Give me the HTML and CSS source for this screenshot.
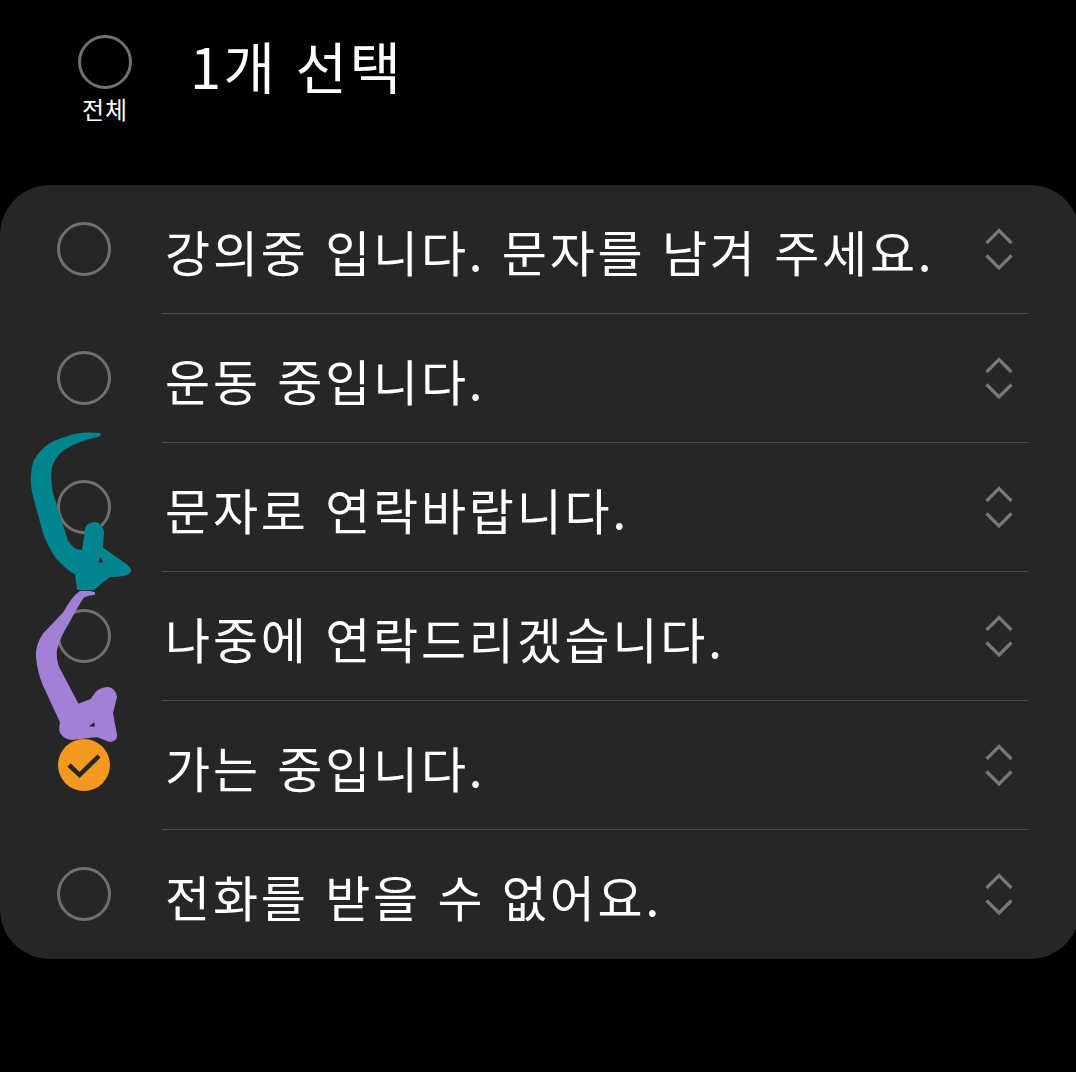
FILE: index.html
```html
<!DOCTYPE html>
<html lang="ko">
<head>
<meta charset="UTF-8">
<meta name="viewport" content="width=device-width, initial-scale=1.0">
<title>1개 선택</title>
<link rel="stylesheet" href="styles.css">
</head>
<body>
  <div class="header">
    <div class="select-all">
      <span class="radio"></span>
      <span class="select-all-label">전체</span>
    </div>
    <h1 class="title">1개 선택</h1>
  </div>

  <div class="panel">
    <div class="row">
      <span class="radio"></span>
      <div class="row-body">
        <span class="message">강의중 입니다. 문자를 남겨 주세요.</span>
        <svg class="sort" viewBox="0 0 28 42"><path d="M1.5 15 14 2.5 26.5 15M1.5 27.500 14 40 26.500 27.500"/></svg>
      </div>
    </div>
    <div class="row">
      <span class="radio"></span>
      <div class="row-body">
        <span class="message">운동 중입니다.</span>
        <svg class="sort" viewBox="0 0 28 42"><path d="M1.5 15 14 2.5 26.5 15M1.5 27.500 14 40 26.500 27.500"/></svg>
      </div>
    </div>
    <div class="row">
      <span class="radio"></span>
      <div class="row-body">
        <span class="message">문자로 연락바랍니다.</span>
        <svg class="sort" viewBox="0 0 28 42"><path d="M1.5 15 14 2.5 26.5 15M1.5 27.500 14 40 26.500 27.500"/></svg>
      </div>
    </div>
    <div class="row">
      <span class="radio"></span>
      <div class="row-body">
        <span class="message">나중에 연락드리겠습니다.</span>
        <svg class="sort" viewBox="0 0 28 42"><path d="M1.5 15 14 2.5 26.5 15M1.5 27.500 14 40 26.500 27.500"/></svg>
      </div>
    </div>
    <div class="row">
      <span class="radio radio-checked">
        <svg viewBox="0 0 52 52"><path d="M11 26 21.500 36 41 17"/></svg>
      </span>
      <div class="row-body">
        <span class="message">가는 중입니다.</span>
        <svg class="sort" viewBox="0 0 28 42"><path d="M1.5 15 14 2.5 26.5 15M1.5 27.500 14 40 26.500 27.500"/></svg>
      </div>
    </div>
    <div class="row">
      <span class="radio"></span>
      <div class="row-body">
        <span class="message">전화를 받을 수 없어요.</span>
        <svg class="sort" viewBox="0 0 28 42"><path d="M1.5 15 14 2.5 26.5 15M1.5 27.500 14 40 26.500 27.500"/></svg>
      </div>
    </div>
  </div>

  <!-- hand drawn arrows on top of the screenshot -->
  <svg class="scribble" viewBox="0 0 1076 1072">
    <path class="scribble-teal" fill-rule="evenodd" d="M99 434Q80 432 68 437Q51 442 44 449Q32 459 32 475Q31 488 35 500L44 533Q50 549 57 558Q66 568 76 574L78 589L94 589Q101 582 110 576Q120 576 127 574Q132 571 129 568Q127 565 122 562L102 548L103 532Q101 523 94 523Q86 524 86 530L83 551Q74 552 67 541L52 493Q49 478 51 467Q55 455 64 449Q78 440 97 436Q101 435 99 434ZM97 564 100 555 105 563Z"/>
    <path class="scribble-purple" fill-rule="evenodd" d="M94 593Q88 591 80 592Q72 598 64 613L44 634Q36 645 37 657Q38 670 43 683L61 722Q59 731 62 734Q66 739 72 739L97 736L110 741Q117 740 116 735L112 713L116 697Q114 688 107 688Q99 689 96 693L91 700L78 705L58 667Q55 658 56 650Q59 637 68 623Q77 606 83 597Q88 594 94 594ZM87 727 95 720 96 728Z"/>
  </svg>
</body>
</html>
```

FILE: styles.css
```css
html {
  overflow-x: hidden;
}

body {
  font-family: "Noto Sans CJK KR", "Noto Sans", sans-serif;
  margin: 0;
  padding: 0;
  background-color: #000;
  color: #fff;
  position: relative;
  height: 1072px;
  overflow: hidden;
}

.header {
  display: flex;
  height: 185px;
  padding-left: 78px;
  box-sizing: border-box;
}

.select-all {
  display: flex;
  flex-direction: column;
  align-items: center;
  padding-top: 35px;
  width: 54px;
}

.select-all-label {
  font-size: 24px;
  line-height: 28px;
  margin-top: 6px;
  letter-spacing: 1px;
  white-space: nowrap;
}

.title {
  margin: 29px 0 0 58px;
  font-size: 56px;
  line-height: 72px;
  font-weight: 400;
  letter-spacing: 2.4px;
}

.panel {
  width: 1080px;
  background-color: #262626;
  border-radius: 50px;
}

.row {
  display: flex;
  align-items: center;
  height: 129px;
  padding-left: 57px;
  box-sizing: border-box;
}

.radio {
  flex: none;
  display: block;
  width: 54px;
  height: 54px;
  border: 3px solid #707070;
  border-radius: 50%;
  box-sizing: border-box;
}

.row .radio {
  margin-bottom: 2px;
}

.row .radio-checked {
  background-color: #f4991f;
  border: none;
  margin: 0 1px 2px;
  width: 52px;
  height: 52px;
}

.radio-checked svg {
  display: block;
}

.radio-checked path {
  fill: none;
  stroke: #262626;
  stroke-width: 4.5;
}

.row-body {
  flex: none;
  display: flex;
  align-items: center;
  justify-content: space-between;
  width: 866px;
  height: 100%;
  margin-left: 51px;
  padding: 0 15px 0 3px;
  box-sizing: border-box;
  border-bottom: 1px solid #4a4a4a;
}

.row:last-child .row-body {
  border-bottom: none;
}

.message {
  font-size: 49px;
  line-height: 72px;
  letter-spacing: 2.8px;
  padding-top: 3px;
  white-space: nowrap;
}

.sort {
  flex: none;
  width: 28px;
  height: 42px;
  margin-bottom: 1px;
}

.row:last-child .sort {
  margin-bottom: 2px;
}

.sort path {
  fill: none;
  stroke: #787878;
  stroke-width: 3.2;
}

.scribble {
  position: absolute;
  top: 0;
  left: 0;
  width: 1076px;
  height: 1072px;
  pointer-events: none;
}

.scribble path {
  stroke-width: 2;
  stroke-linejoin: round;
}

.scribble-teal {
  fill: #00858f;
  stroke: #00858f;
}

.scribble-purple {
  fill: #a280d5;
  stroke: #a280d5;
}
```
